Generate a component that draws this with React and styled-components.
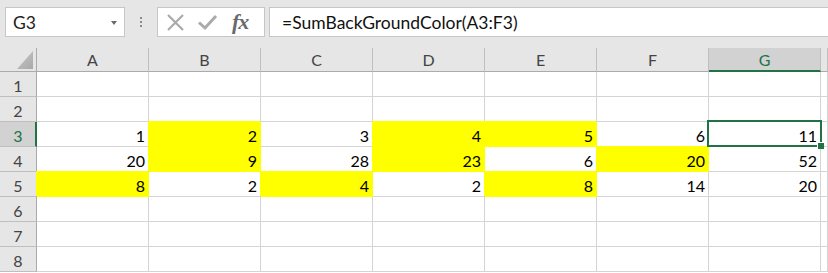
import React, { Fragment } from 'react';
import styled, { createGlobalStyle, css } from 'styled-components';

const GlobalStyle = createGlobalStyle`
  * {
    margin: 0;
    padding: 0;
    box-sizing: border-box;
  }

  body {
    font-family: 'Lato', 'Liberation Sans', sans-serif;
    background: #ffffff;
    color: #000;
  }
`;

const COLORS = {
  chrome: '#e6e6e6',
  boxBorder: '#c6c6c6',
  grid: '#d4d4d4',
  headerLine: '#bfbfbf',
  headerEdge: '#ababab',
  headerText: '#444444',
  selectedHeader: '#d2d2d2',
  green: '#217346',
  yellow: '#ffff00',
  icon: '#aaaaaa',
};

const COLUMNS = ['A', 'B', 'C', 'D', 'E', 'F', 'G'];

// value, filled
const ROWS = [
  [],
  [],
  [[1], [2, true], [3], [4, true], [5, true], [6], [11]],
  [[20], [9, true], [28], [23, true], [6], [20, true], [52]],
  [[8, true], [2], [4, true], [2], [8, true], [14], [20]],
  [],
  [],
  [],
];

const SELECTED = { row: 3, col: 'G' };

const Window = styled.div`
  width: 828px;
  height: 273px;
  overflow: hidden;
  display: flex;
  flex-direction: column;
  background: #fff;
`;

const FormulaBar = styled.div`
  height: 48px;
  flex-shrink: 0;
  background: ${COLORS.chrome};
  display: flex;
  align-items: flex-start;
  padding: 7px 0 0 5px;
`;

const NameBox = styled.div`
  width: 120px;
  height: 30px;
  background: #fff;
  border: 1px solid ${COLORS.boxBorder};
  display: flex;
  align-items: center;
  justify-content: space-between;
  padding: 0 7px 0 7px;
  font-size: 17.5px;
  color: #222;
`;

const DropArrow = styled.span`
  width: 0;
  height: 0;
  border-left: 3.5px solid transparent;
  border-right: 3.5px solid transparent;
  border-top: 4px solid #6a6a6a;
  margin-top: 1px;
`;

const Grip = styled.div`
  width: 32px;
  height: 30px;
  display: flex;
  flex-direction: column;
  align-items: center;
  justify-content: center;
  gap: 2px;

  span {
    width: 2px;
    height: 2px;
    background: #8a8a8a;
  }
`;

const FormulaButtons = styled.div`
  width: 108px;
  height: 30px;
  background: #fff;
  border: 1px solid ${COLORS.boxBorder};
  display: flex;
  align-items: center;
  padding-left: 8px;
  gap: 12px;
`;

const FxLabel = styled.span`
  font-family: 'Liberation Serif', 'DejaVu Serif', serif;
  font-style: italic;
  font-weight: bold;
  font-size: 22px;
  color: #6a6a6a;
  margin-left: 2px;
  letter-spacing: -1px;
`;

const FormulaInput = styled.div`
  flex: 1;
  height: 30px;
  margin-left: 4px;
  background: #fff;
  border-top: 1px solid ${COLORS.boxBorder};
  border-bottom: 1px solid ${COLORS.boxBorder};
  border-left: 1px solid ${COLORS.boxBorder};
  display: flex;
  align-items: center;
  padding-left: 12px;
  font-size: 17.5px;
  color: #111;
`;

const Sheet = styled.div`
  display: grid;
  grid-template-columns: 37px repeat(7, 112px) 1fr;
  grid-template-rows: 24px repeat(8, 25px);
`;

const Corner = styled.div`
  background: ${COLORS.chrome};
  border-right: 1px solid ${COLORS.headerEdge};
  border-bottom: 1px solid ${COLORS.headerEdge};
  display: flex;
  align-items: flex-end;
  justify-content: flex-end;
  padding: 0 3px 2px 0;
`;

const CornerMark = styled.span`
  width: 16px;
  height: 18px;
  background: linear-gradient(135deg, #c8c8c8, #a9a9a9);
  clip-path: polygon(100% 0, 100% 100%, 0 100%);
`;

const ColHeader = styled.div`
  background: ${(p) => (p.$active ? COLORS.selectedHeader : COLORS.chrome)};
  color: ${(p) => (p.$active ? COLORS.green : COLORS.headerText)};
  border-right: 1px solid ${COLORS.headerLine};
  border-bottom: ${(p) =>
    p.$active ? `2px solid ${COLORS.green}` : `1px solid ${COLORS.headerEdge}`};
  display: flex;
  align-items: center;
  justify-content: center;
  font-size: 16px;
  padding-top: ${(p) => (p.$active ? '1px' : '0')};
`;

const RowHeader = styled.div`
  background: ${(p) => (p.$active ? COLORS.selectedHeader : COLORS.chrome)};
  color: ${(p) => (p.$active ? COLORS.green : COLORS.headerText)};
  border-right: ${(p) =>
    p.$active ? `2px solid ${COLORS.green}` : `1px solid ${COLORS.headerEdge}`};
  border-bottom: 1px solid ${COLORS.headerLine};
  display: flex;
  align-items: flex-end;
  justify-content: center;
  font-size: 16px;
  line-height: 20px;
  padding-left: ${(p) => (p.$active ? '1px' : '0')};
`;

const Cell = styled.div`
  position: relative;
  border-right: 1px solid ${COLORS.grid};
  border-bottom: 1px solid ${COLORS.grid};
  display: flex;
  align-items: flex-end;
  justify-content: flex-end;
  padding-right: 3px;
  font-size: 16px;
  line-height: 20px;

  ${(p) =>
    p.$filled &&
    css`
      background: ${COLORS.yellow};
      border-color: ${COLORS.yellow};
      box-shadow: -1px -1px 0 0 ${COLORS.yellow};
    `}

  ${(p) =>
    p.$selected &&
    css`
      z-index: 2;

      &::before {
        content: '';
        position: absolute;
        top: -2px;
        left: -2px;
        right: -2px;
        bottom: -1px;
        border: 2px solid ${COLORS.green};
      }

      &::after {
        content: '';
        position: absolute;
        right: -4px;
        bottom: -3px;
        width: 6px;
        height: 6px;
        background: ${COLORS.green};
        border-left: 1px solid #fff;
        border-top: 1px solid #fff;
      }
    `}
`;

const CancelIcon = () => (
  <svg width="19" height="19" viewBox="0 0 19 19">
    <path d="M2 2 L17 17 M17 2 L2 17" stroke={COLORS.icon} strokeWidth="2.2" fill="none" />
  </svg>
);

const CheckIcon = () => (
  <svg width="21" height="18" viewBox="0 0 21 18">
    <path d="M2 9.5 L8 15 L19 3" stroke={COLORS.icon} strokeWidth="3" fill="none" />
  </svg>
);

const App = () => {
  return (
    <Fragment>
      <GlobalStyle />
      <Window>
        <FormulaBar>
          <NameBox>
            G3
            <DropArrow />
          </NameBox>
          <Grip>
            <span />
            <span />
            <span />
          </Grip>
          <FormulaButtons>
            <CancelIcon />
            <CheckIcon />
            <FxLabel>fx</FxLabel>
          </FormulaButtons>
          <FormulaInput>=SumBackGroundColor(A3:F3)</FormulaInput>
        </FormulaBar>

        <Sheet>
          <Corner>
            <CornerMark />
          </Corner>
          {COLUMNS.map((c) => (
            <ColHeader key={c} $active={c === SELECTED.col}>
              {c}
            </ColHeader>
          ))}
          <ColHeader />

          {ROWS.map((cells, i) => {
            const row = i + 1;
            return (
              <Fragment key={row}>
                <RowHeader $active={row === SELECTED.row}>{row}</RowHeader>
                {COLUMNS.map((c, j) => {
                  const [value, filled] = cells[j] || [];
                  return (
                    <Cell
                      key={c}
                      $filled={filled}
                      $selected={row === SELECTED.row && c === SELECTED.col}
                    >
                      {value}
                    </Cell>
                  );
                })}
                <Cell />
              </Fragment>
            );
          })}
        </Sheet>
      </Window>
    </Fragment>
  );
};

export default App;
